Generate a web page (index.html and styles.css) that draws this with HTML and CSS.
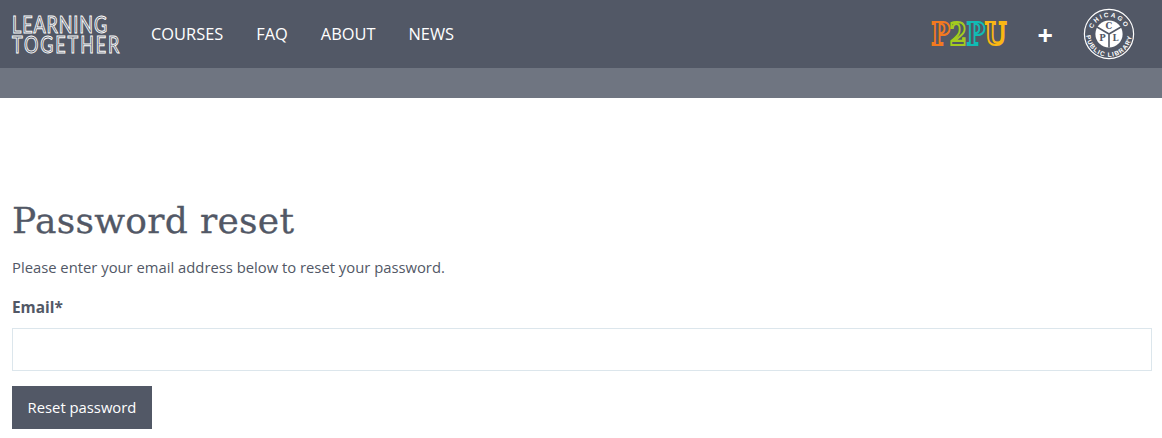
FILE: index.html
```html
<!DOCTYPE html>
<html lang="en">
<head>
  <meta charset="UTF-8">
  <title>Password reset</title>
  <meta name="viewport" content="width=device-width, initial-scale=1.0">
  <link rel="stylesheet" href="styles.css">
</head>
<body>

  <header class="navbar">
    <a class="brand" href="#">
      <span class="brand-top">LEARNING</span>
      <span class="brand-bottom">TOGETHER</span>
    </a>
    <nav class="nav-links">
      <a href="#">COURSES</a>
      <a href="#">FAQ</a>
      <a href="#">ABOUT</a>
      <a href="#">NEWS</a>
    </nav>
    <div class="partners">
      <div class="p2pu">
        <span class="p-orange">P</span><span class="p-green">2</span><span class="p-teal">P</span><span class="p-yellow">U</span>
      </div>
      <div class="plus">+</div>
      <svg class="cpl" width="52" height="52" viewBox="0 0 52 52">
        <circle cx="26" cy="26" r="24.6" fill="#525866" stroke="#fff" stroke-width="1.2"/>
        <circle cx="26" cy="26" r="13.6" fill="#fff"/>
        <path d="M26 26 L26 39.5 M26 26 L14 19 M26 26 L38 19" fill="none" stroke="#525866" stroke-width="1.6"/>
        <defs>
          <path id="arc-top" d="M9 26 A17 17 0 0 1 43 26"/>
          <path id="arc-bottom" d="M3.2 26 A22.8 22.8 0 0 0 48.8 26"/>
        </defs>
        <text class="cpl-ring cpl-chicago"><textPath href="#arc-top" startOffset="50%" text-anchor="middle">CHICAGO</textPath></text>
        <text class="cpl-ring cpl-library"><textPath href="#arc-bottom" startOffset="50%" text-anchor="middle">PUBLIC LIBRARY</textPath></text>
        <text class="cpl-letter" x="26" y="21">C</text>
        <text class="cpl-letter" x="19.5" y="33">P</text>
        <text class="cpl-letter" x="32.5" y="33">L</text>
      </svg>
    </div>
  </header>
  <div class="subbar"></div>

  <main class="container">
    <h1>Password reset</h1>
    <p>Please enter your email address below to reset your password.</p>
    <form>
      <label for="email">Email*</label>
      <input type="email" id="email">
      <button type="button">Reset password</button>
    </form>
  </main>

</body>
</html>
```

FILE: styles.css
```css
body {
  margin: 0;
  background: #fff;
  color: #525866;
  font-family: "Open Sans", sans-serif;
  font-size: 14.8px;
  overflow: hidden;
}

/* Top navigation */
.navbar {
  display: flex;
  align-items: center;
  height: 68px;
  padding: 0 27px 0 12px;
  background: #525866;
}

.brand {
  display: flex;
  flex-direction: column;
  width: 139px;
  color: transparent;
  font-family: "Lato", sans-serif;
  font-size: 18px;
  line-height: 20px;
  text-decoration: none;
  opacity: 0.99;
  -webkit-text-stroke: 0.8px #fff;
}

.brand span {
  transform: scaleY(1.25);
}

.brand-top {
  letter-spacing: 0.9px;
}

.brand-bottom {
  letter-spacing: 1.9px;
}

.nav-links {
  display: flex;
  gap: 33px;
  padding-bottom: 2px;
}

.nav-links a {
  color: #fff;
  font-size: 16.4px;
  text-decoration: none;
}

.partners {
  display: flex;
  align-items: center;
  margin-left: auto;
}

.p2pu {
  display: flex;
  color: transparent;
  font-family: "DejaVu Serif", serif;
  font-size: 31px;
  font-weight: bold;
  letter-spacing: -0.5px;
  opacity: 0.99;
  transform: scaleX(0.8);
  margin: 0 -9px;
}

.p-orange { -webkit-text-stroke: 2.2px #f47a1f; }
.p-green { -webkit-text-stroke: 2.2px #a5cd1e; }
.p-teal { -webkit-text-stroke: 2.2px #10bdb5; }
.p-yellow { -webkit-text-stroke: 2.2px #fdb913; }

.plus {
  margin: 0 30px 0 31px;
  color: #fff;
  font-size: 27px;
  font-weight: bold;
  line-height: 1;
}

.cpl-ring {
  fill: #fff;
  font-family: "Liberation Sans", sans-serif;
  font-size: 6.4px;
  font-weight: bold;
}

.cpl-chicago {
  letter-spacing: 1.8px;
}

.cpl-library {
  letter-spacing: 1px;
}

.cpl-letter {
  fill: #525866;
  font-family: "DejaVu Serif", serif;
  font-size: 8.5px;
  font-weight: bold;
  text-anchor: middle;
}

.subbar {
  height: 30px;
  background: #6f7581;
}

/* Reset form */
.container {
  padding: 98px 10px 0 12px;
}

h1 {
  margin: 0;
  font-family: "DejaVu Serif", serif;
  font-size: 36px;
  font-weight: normal;
  line-height: 50px;
  letter-spacing: 0.3px;
  -webkit-text-stroke: 0.3px #525866;
}

p {
  margin: 9px 0 0;
  line-height: 24px;
}

label {
  display: block;
  margin-top: 17px;
  font-size: 15.4px;
  font-weight: 700;
  line-height: 24px;
}

input {
  display: block;
  box-sizing: border-box;
  width: 100%;
  height: 43px;
  margin-top: 8px;
  border: 1px solid #dce6ec;
  background: #fff;
}

button {
  display: block;
  width: 140px;
  height: 43px;
  margin-top: 15px;
  padding-bottom: 3px;
  border: none;
  background: #525866;
  color: #fff;
  font-family: "Open Sans", sans-serif;
  font-size: 14.8px;
}
```
